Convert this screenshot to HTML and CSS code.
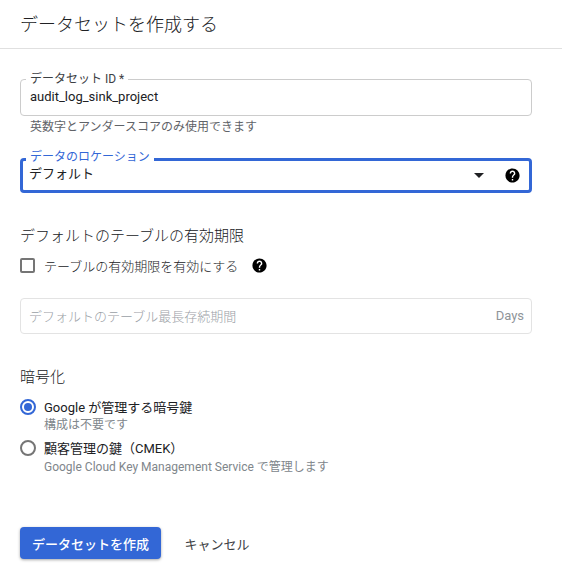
FILE: index.html
```html
<!DOCTYPE html>
<html lang="ja">
<head>
<meta charset="utf-8">
<title>データセットを作成する</title>
<link rel="stylesheet" href="styles.css">
</head>
<body>
<header class="header"><h1 class="title">データセットを作成する</h1></header>
<main class="form">
  <div class="field field-id">
    <span class="float-label">データセット ID *</span>
    <span class="value">audit_log_sink_project</span>
  </div>
  <p class="help">英数字とアンダースコアのみ使用できます</p>
  <div class="field field-location">
    <span class="float-label label-blue">データのロケーション</span>
    <span class="value grow">デフォルト</span>
    <svg class="caret" viewBox="0 0 10 5" width="10" height="5"><path d="M0 0h10L5 5z"/></svg>
    <svg class="help-icon" viewBox="0 0 24 24" width="17" height="17"><path d="M12 2C6.48 2 2 6.48 2 12s4.48 10 10 10 10-4.48 10-10S17.52 2 12 2zm1 17h-2v-2h2v2zm2.07-7.75l-.9.92C13.45 12.9 13 13.5 13 15h-2v-.5c0-1.1.45-2.1 1.17-2.83l1.24-1.26c.37-.36.59-.86.59-1.41 0-1.1-.9-2-2-2s-2 .9-2 2H8c0-2.21 1.79-4 4-4s4 1.79 4 4c0 .88-.36 1.68-.93 2.25z"/></svg>
  </div>
  <h2 class="section-title expiry-title">デフォルトのテーブルの有効期限</h2>
  <div class="check-row">
    <span class="checkbox"></span>
    <span class="check-label">テーブルの有効期限を有効にする</span>
    <svg class="help-icon" viewBox="0 0 24 24" width="17" height="17"><path d="M12 2C6.48 2 2 6.48 2 12s4.48 10 10 10 10-4.48 10-10S17.52 2 12 2zm1 17h-2v-2h2v2zm2.07-7.75l-.9.92C13.45 12.9 13 13.5 13 15h-2v-.5c0-1.1.45-2.1 1.17-2.83l1.24-1.26c.37-.36.59-.86.59-1.41 0-1.1-.9-2-2-2s-2 .9-2 2H8c0-2.21 1.79-4 4-4s4 1.79 4 4c0 .88-.36 1.68-.93 2.25z"/></svg>
  </div>
  <div class="field field-days">
    <span class="placeholder grow">デフォルトのテーブル最長存続期間</span>
    <span class="suffix">Days</span>
  </div>
  <h2 class="section-title enc-title">暗号化</h2>
  <div class="radio-row radio-first">
    <span class="radio radio-on"></span>
    <div class="radio-text">
      <div class="radio-label">Google が管理する暗号鍵</div>
      <div class="radio-sub">構成は不要です</div>
    </div>
  </div>
  <div class="radio-row radio-second">
    <span class="radio"></span>
    <div class="radio-text">
      <div class="radio-label">顧客管理の鍵（CMEK）</div>
      <div class="radio-sub radio-sub-low">Google Cloud Key Management Service で管理します</div>
    </div>
  </div>
  <div class="actions">
    <button class="btn btn-primary" type="button">データセットを作成</button>
    <button class="btn btn-text" type="button">キャンセル</button>
  </div>
</main>
</body>
</html>
```
FILE: styles.css
```css
* { box-sizing: border-box; }
html, body { margin: 0; padding: 0; background: #fff; }
body {
  width: 562px;
  height: 582px;
  overflow: hidden;
  font-family: Roboto, "Noto Sans CJK JP", sans-serif;
  color: #202124;
}
.header { height: 49px; border-bottom: 1px solid #e0e0e0; padding: 15px 20px 0; }
.title { margin: 0; font-size: 18px; font-weight: 300; line-height: 20px; }
.form { padding: 30px 30px 0 20px; }
.field {
  position: relative;
  display: flex;
  align-items: center;
  width: 512px;
  padding: 0 10px;
  font-size: 13px;
}
.grow { flex: 1; }
.field-id { height: 37px; border: 1px solid #ccc; border-radius: 4px; padding-left: 9px; }
.field-id .value { margin-bottom: 2px; }
.float-label {
  position: absolute;
  left: 5px;
  top: -8px;
  padding: 0 4px;
  background: #fff;
  font-size: 12px;
  line-height: 14px;
  color: #3c4043;
}
.value { line-height: 16px; }
.help { margin: 4px 0 0 10px; font-size: 12px; line-height: 14px; color: #5f6368; }
.field-location {
  height: 35px;
  margin-top: 24px;
  border: 3px solid #3367d6;
  border-radius: 4px;
  padding-left: 6px;
  padding-right: 8px;
}
.field-location .value { margin-bottom: 4px; }
.field-location .float-label { left: 3px; top: -11px; line-height: 14px; }
.label-blue { color: #3367d6; }
.caret { fill: #202124; margin-right: 20px; }
.help-icon { fill: #000; flex: none; }
.section-title { margin: 0; font-size: 15px; font-weight: 300; line-height: 20px; }
.expiry-title { margin-top: 33px; }
.check-row { display: flex; align-items: center; height: 16px; margin-top: 11px; font-size: 13px; }
.checkbox { width: 15px; height: 15px; border: 2px solid #757575; border-radius: 2px; }
.check-label { margin-left: 9px; margin-right: 13px; font-weight: 300; }
.field-days { height: 36px; margin-top: 25px; border: 1px solid #e3e3e3; border-radius: 4px; padding-left: 8px; }
.field-days .placeholder, .field-days .suffix { margin-bottom: 2px; }
.placeholder { color: #9aa0a6; font-weight: 300; }
.suffix { font-size: 13px; color: #8f9499; margin-right: -3px; }
.enc-title { margin-top: 33px; }
.radio-row { display: flex; align-items: flex-start; }
.radio-first { margin-top: 11px; }
.radio-second { margin-top: 6px; }
.radio { width: 16px; height: 16px; margin-top: 1px; border: 2px solid #757575; border-radius: 50%; flex: none; position: relative; }
.radio-on { border-color: #3367d6; }
.radio-on::after { content: ""; position: absolute; left: 2px; top: 2px; width: 8px; height: 8px; border-radius: 50%; background: #3367d6; }
.radio-text { margin-left: 8px; }
.radio-label { font-size: 13px; line-height: 19px; }
.radio-sub { font-size: 12px; line-height: 16px; color: #80868b; }
.radio-sub-low { margin-top: 1px; }
.actions { display: flex; align-items: center; margin-top: 52px; }
.btn { font-family: inherit; font-size: 13px; font-weight: 500; border: 0; height: 32px; border-radius: 4px; padding: 0; }
.btn-primary { width: 141px; background: #3367d6; color: #fff; box-shadow: 0 1px 3px rgba(0,0,0,.35); }
.btn-text { width: 90px; margin-left: 11px; background: none; color: #3c4043; font-weight: 400; }
```
